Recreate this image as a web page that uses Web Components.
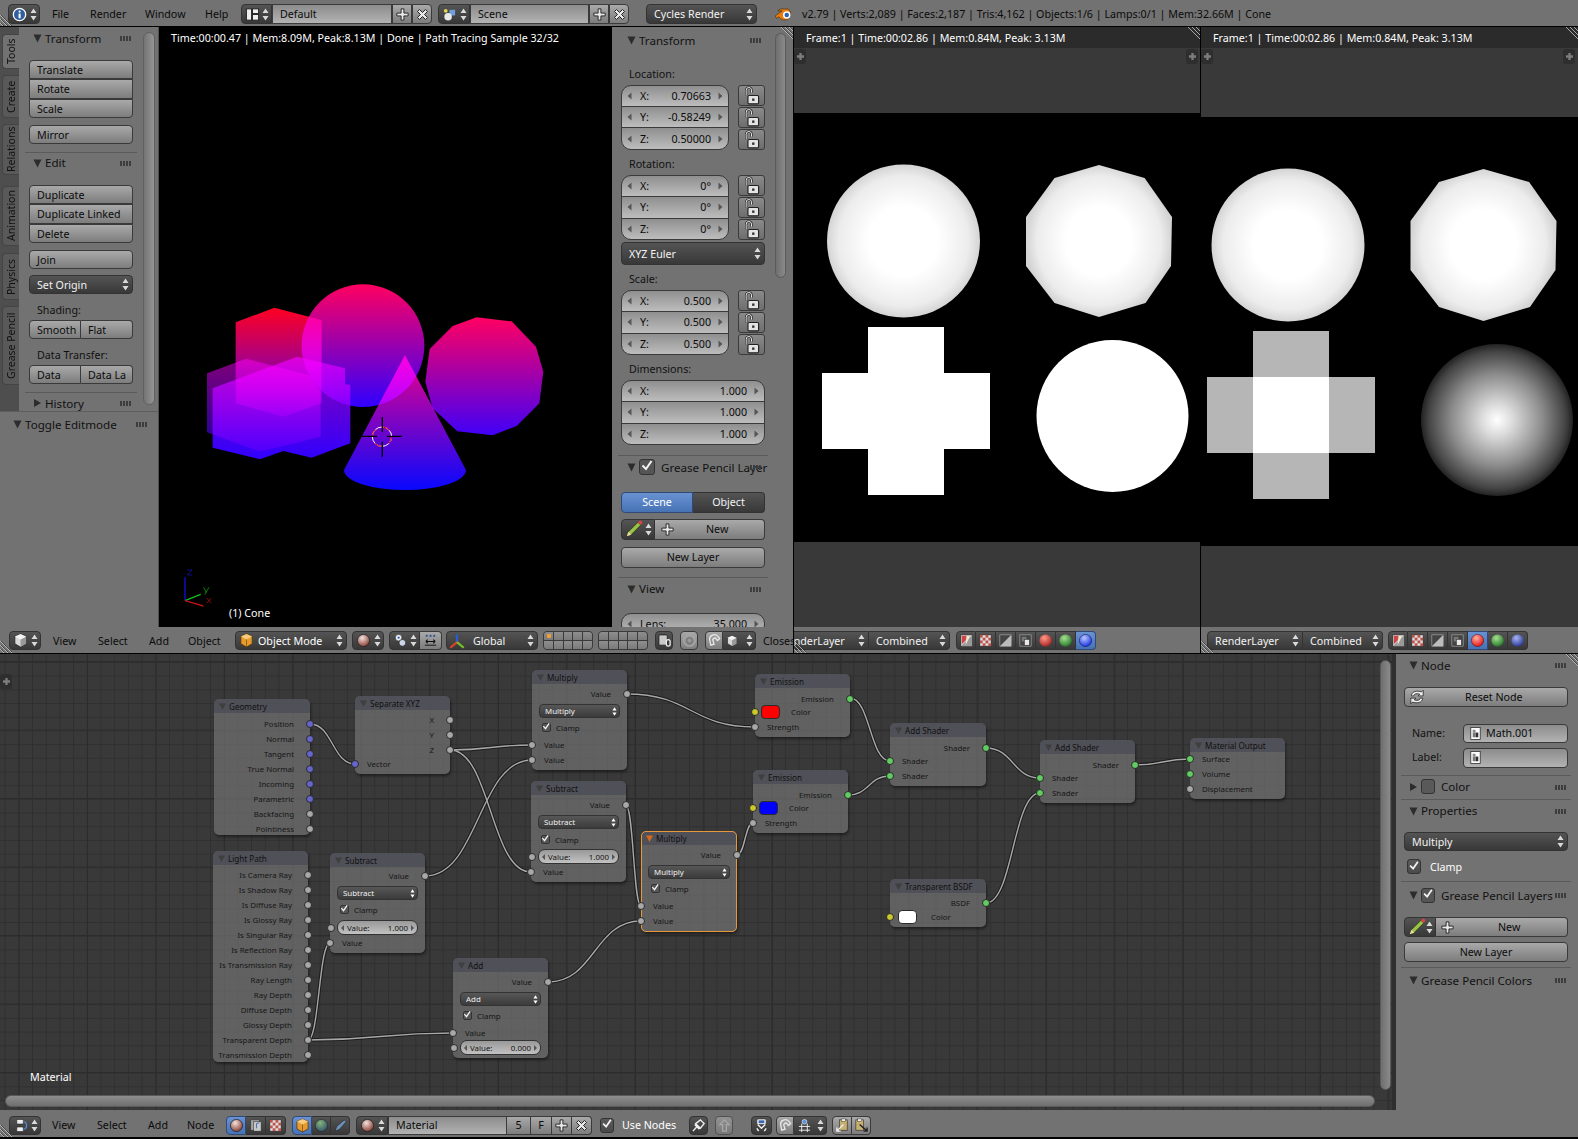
<!doctype html>
<html><head><meta charset="utf-8"><title>Blender</title>
<style>html,body{margin:0;padding:0;background:#000}</style></head>
<body>
<b-app>
  <b-hdr slot="top" style="height:26px;padding-top:2px">
    <b-w k="d" c ar style="margin-left:8px;width:32px;height:20px"><b-ic n="info"></b-ic></b-w>
    <b-m style="margin-left:12px;width:38px">File</b-m><b-m style="width:55px">Render</b-m><b-m style="width:60px">Window</b-m><b-m style="width:36px">Help</b-m>
    <b-w k="d" r="l" c ar style="width:31px;height:20px"><b-ic n="layout"></b-ic></b-w>
    <b-w k="f" r="n" style="width:120px;height:20px">Default</b-w>
    <b-w r="n" c style="width:20px;height:20px"><b-ic n="plus"></b-ic></b-w>
    <b-w r="r" c style="width:20px;height:20px"><b-ic n="x"></b-ic></b-w>
    <b-w k="d" r="l" c ar style="margin-left:6px;width:32px;height:20px"><b-ic n="scene"></b-ic></b-w>
    <b-w k="f" r="n" style="width:119px;height:20px">Scene</b-w>
    <b-w r="n" c style="width:20px;height:20px"><b-ic n="plus"></b-ic></b-w>
    <b-w r="r" c style="width:20px;height:20px"><b-ic n="x"></b-ic></b-w>
    <b-w k="d" ar style="margin-left:17px;width:111px;height:20px">Cycles Render</b-w>
    <b-ic n="logo" style="margin-left:17px" s="20"></b-ic>
    <b-m style="margin-left:8px">v2.79 | Verts:2,089 | Faces:2,187 | Tris:4,162 | Objects:1/6 | Lamps:0/1 | Mem:32.66M | Cone</b-m>
    <b-hatch style="left:0;top:14px" k="bl"></b-hatch>
  </b-hdr>
  <b-upper slot="upper">
    <b-area style="width:793px">
      <b-row style="height:600px">
        <b-shelf>
          <b-tabs>
            <b-tab on style="margin-top:7px;height:35px">Tools</b-tab>
            <b-tab style="margin-top:6px;height:43px">Create</b-tab>
            <b-tab style="margin-top:6px;height:51px">Relations</b-tab>
            <b-tab style="margin-top:11px;height:60px">Animation</b-tab>
            <b-tab style="margin-top:7px;height:47px">Physics</b-tab>
            <b-tab style="margin-top:6px;height:79px">Grease Pencil</b-tab>
          </b-tabs>
          <b-col slot="col" style="padding-left:10px;width:104px">
            <b-ph t="Transform" style="margin-left:-10px;width:120px;height:22px" g="101"></b-ph>
            <b-w style="margin-top:11px" r="t">Translate</b-w>
            <b-w r="n" style="height:20px">Rotate</b-w>
            <b-w r="b">Scale</b-w>
            <b-w style="margin-top:7px">Mirror</b-w>
            <b-sep style="margin:8px -4px 0"></b-sep>
            <b-ph t="Edit" style="margin-top:-2px;margin-left:-10px;width:120px;height:23px" g="101"></b-ph>
            <b-w style="margin-top:11px" r="t">Duplicate</b-w>
            <b-w r="n" style="height:20px">Duplicate Linked</b-w>
            <b-w r="b">Delete</b-w>
            <b-w style="margin-top:7px">Join</b-w>
            <b-w k="d" ar style="margin-top:6px">Set Origin</b-w>
            <b-lbl style="margin-top:8.5px">Shading:</b-lbl>
            <b-row style="margin-top:2.5px">
              <b-w r="l" style="width:52px">Smooth</b-w><b-w r="r" style="width:52px;border-left:0">Flat</b-w>
            </b-row>
            <b-lbl style="margin-top:8.5px">Data Transfer:</b-lbl>
            <b-row style="margin-top:2.5px">
              <b-w r="l" style="width:52px">Data</b-w><b-w r="r" style="width:52px;border-left:0">Data La</b-w>
            </b-row>
            <b-sep style="margin:8px -4px 0"></b-sep>
            <b-ph t="History" closed style="margin-top:-1px;margin-left:-10px;width:120px;height:22px" g="101"></b-ph>
          </b-col>
          <b-ph slot="bottom" t="Toggle Editmode" style="height:24px;width:158px;padding-left:13px;box-sizing:border-box" g="136"></b-ph>
        </b-shelf>
        <b-viewport>
          <b-vtext style="left:12px;top:4px;color:#fff">Time:00:00.47 | Mem:8.09M, Peak:8.13M | Done | Path Tracing Sample 32/32</b-vtext>
          <b-scene3d></b-scene3d>
          <b-vtext style="left:70px;top:579px;color:#fff">(1) Cone</b-vtext>
        </b-viewport>
        <b-npanel>
          <b-col style="width:155px;padding-left:9px;--ck:16px">
            <b-ph t="Transform" style="height:26px;margin-left:-8px" g="137"></b-ph>
            <b-lbl style="margin-top:13.5px">Location:</b-lbl>
            <b-xf style="margin-top:3.5px" l1="X:" v1="0.70663" l2="Y:" v2="-0.58249" l3="Z:" v3="0.50000"></b-xf>
            <b-lbl style="margin-top:7.5px">Rotation:</b-lbl>
            <b-xf style="margin-top:3px" l1="X:" v1="0°" l2="Y:" v2="0°" l3="Z:" v3="0°"></b-xf>
            <b-w k="d" ar style="margin-top:2px;height:23px;width:144px">XYZ Euler</b-w>
            <b-lbl style="margin-top:7px">Scale:</b-lbl>
            <b-xf style="margin-top:3px" l1="X:" v1="0.500" l2="Y:" v2="0.500" l3="Z:" v3="0.500"></b-xf>
            <b-lbl style="margin-top:7px">Dimensions:</b-lbl>
            <b-xf nolock style="margin-top:3px;width:144px" l1="X:" v1="1.000" l2="Y:" v2="1.000" l3="Z:" v3="1.000"></b-xf>
            <b-sep style="margin:10px -3px 0;width:150px"></b-sep>
            <b-ph t="Grease Pencil Layer" chk style="margin-top:-2px;height:26px;margin-left:-8px" g="137"></b-ph>
            <b-row style="margin-top:11.5px;width:144px">
              <b-w k="a" r="l" c style="width:72px;height:21px">Scene</b-w><b-w k="d" r="r" c style="width:72px;height:21px;border-left:0">Object</b-w>
            </b-row>
            <b-row style="margin-top:6px;width:144px">
              <b-w k="d" r="l" c ar style="width:34px;height:21px"><b-ic n="pencil" s="18"></b-ic></b-w>
              <b-w r="r" style="width:110px;height:21px;border-left:0;padding-left:5px"><b-ic n="plus"></b-ic><span style="margin-left:31px">New</span></b-w>
            </b-row>
            <b-w c style="margin-top:7px;height:21px;width:144px">New Layer</b-w>
            <b-sep style="margin:9px -3px 0;width:150px"></b-sep>
            <b-ph t="View" style="margin-top:-1px;height:24px;margin-left:-8px" g="137"></b-ph>
            <b-num style="margin-top:12px;width:144px" r="a" l="Lens:" v="35.000"></b-num>
          </b-col>
          <b-sb style="position:absolute;left:163px;top:6px;width:11px;height:245px"></b-sb>
          <b-hatch style="right:0;top:0" k="tr"></b-hatch>
        </b-npanel>
      </b-row>
      <b-hdr style="padding-top:1px">
        <b-w k="d" c ar style="margin-left:9px;width:32px"><b-ic n="cubew"></b-ic></b-w>
        <b-m style="margin-left:12px;width:45px">View</b-m><b-m style="width:51px">Select</b-m><b-m style="width:39px">Add</b-m><b-m style="width:47px">Object</b-m>
        <b-w k="d" ar style="width:112px;padding-left:3px"><b-ic n="cubeo"></b-ic><span style="margin-left:4px;color:#fff">Object Mode</span></b-w>
        <b-w k="d" c ar style="margin-left:5px;width:32px"><b-ic n="sphere"></b-ic></b-w>
        <b-w k="d" r="l" c ar style="margin-left:5px;width:31px"><b-ic n="pivot"></b-ic></b-w>
        <b-w r="r" c style="width:22px;border-left:0"><b-ic n="manip"></b-ic></b-w>
        <b-w k="d" ar style="margin-left:4px;width:92px;padding-left:1px"><b-ic n="axes" s="18"></b-ic><span style="margin-left:7px">Global</span></b-w>
        <b-layers dot style="margin-left:5px"></b-layers>
        <b-layers style="margin-left:5px"></b-layers>
        <b-w k="d" c style="margin-left:7px;width:18px"><b-ic n="lockcam"></b-ic></b-w>
        <b-w c style="margin-left:7px;width:18px"><b-ic n="target"></b-ic></b-w>
        <b-w r="l" c style="margin-left:7px;width:18px"><b-ic n="magnet"></b-ic></b-w>
        <b-w k="d" r="r" c ar style="width:33px;border-left:0"><b-ic n="cubew" s="12"></b-ic></b-w>
        <b-m style="margin-left:7px">Closest</b-m>
        <b-hatch style="left:0;bottom:0" k="bl"></b-hatch>
      </b-hdr>
    </b-area>
    <b-vl></b-vl>
    <b-area style="width:406px">
      <b-imgview t="Frame:1 | Time:00:02.86 | Mem:0.84M, Peak: 3.13M" a="113" vb="794 113 406 429">
        <b-pl style="left:0;top:22px"></b-pl><b-pl style="right:2px;top:22px"></b-pl>
        <b-hatch style="right:0;top:0" k="tr"></b-hatch>
      </b-imgview>
      <b-hdr style="padding-top:1px">
        <b-w k="d" r="l" ar style="margin-left:-21px;width:96px;padding-left:7px;flex:none">RenderLayer</b-w>
        <b-w k="d" r="r" ar style="width:81px;border-left:0">Combined</b-w>
        <b-chan style="margin-left:6px" on="b"></b-chan>
        <b-hatch style="left:0;bottom:0" k="bl"></b-hatch>
      </b-hdr>
    </b-area>
    <b-vl></b-vl>
    <b-area style="width:377px">
      <b-imgview two t="Frame:1 | Time:00:02.86 | Mem:0.84M, Peak: 3.13M" a="117" vb="1201 117 377 429">
        <b-pl style="left:0;top:22px"></b-pl><b-pl style="right:3px;top:22px"></b-pl>
        <b-hatch style="right:0;top:0" k="tr"></b-hatch>
      </b-imgview>
      <b-hdr style="padding-top:1px">
        <b-w k="d" r="l" ar style="margin-left:6px;width:96px">RenderLayer</b-w>
        <b-w k="d" r="r" ar style="width:80px;border-left:0">Combined</b-w>
        <b-chan style="margin-left:5px" on="r"></b-chan>
        <b-hatch style="left:0;bottom:0" k="bl"></b-hatch>
      </b-hdr>
    </b-area>
  </b-upper>
  <b-editor slot="editor">
    <b-canvas slot="canvas">
      <b-wires></b-wires>
      <b-pl style="left:0;top:20px"></b-pl>
      <b-node x="214" y="699" w="96" h="136" t="Geometry">
        <b-r o s="v" style="margin-top:3px">Position</b-r><b-r o s="v">Normal</b-r><b-r o s="v">Tangent</b-r><b-r o s="v">True Normal</b-r><b-r o s="v">Incoming</b-r><b-r o s="v">Parametric</b-r><b-r o s="w">Backfacing</b-r><b-r o s="w">Pointiness</b-r>
      </b-node>
      <b-node x="355" y="696" w="95" h="78" t="Separate XYZ">
        <b-r o s="w" style="margin-top:2px">X</b-r><b-r o s="w">Y</b-r><b-r o s="w">Z</b-r><b-r s="v" style="margin-top:-1px">Vector</b-r>
      </b-node>
      <b-node x="532" y="670" w="95" h="100" t="Multiply">
        <b-r o s="w" style="margin-top:2px">Value</b-r><b-nsel>Multiply</b-nsel><b-nchk>Clamp</b-nchk><b-r s="w" style="margin-top:2px">Value</b-r><b-r s="w">Value</b-r>
      </b-node>
      <b-node x="531" y="781" w="95" h="101" t="Subtract">
        <b-r o s="w" style="margin-top:2px">Value</b-r><b-nsel>Subtract</b-nsel><b-nchk style="margin-top:3px">Clamp</b-nchk><b-nfld v="1.000" style="margin-top:2px"></b-nfld><b-r s="w">Value</b-r>
      </b-node>
      <b-node x="641" y="831" w="96" h="101" t="Multiply" active>
        <b-r o s="w" style="margin-top:2px">Value</b-r><b-nsel>Multiply</b-nsel><b-nchk>Clamp</b-nchk><b-r s="w" style="margin-top:2px">Value</b-r><b-r s="w">Value</b-r>
      </b-node>
      <b-node x="755" y="674" w="95" h="63" t="Emission">
        <b-r o s="g" style="margin-top:3px">Emission</b-r><b-r s="y" sw="#ff0000" style="margin-top:-2px">Color</b-r><b-r s="w">Strength</b-r>
      </b-node>
      <b-node x="753" y="770" w="95" h="63" t="Emission">
        <b-r o s="g" style="margin-top:3px">Emission</b-r><b-r s="y" sw="#0000ff" style="margin-top:-2px">Color</b-r><b-r s="w">Strength</b-r>
      </b-node>
      <b-node x="890" y="723" w="96" h="63" t="Add Shader">
        <b-r o s="g" style="margin-top:3px">Shader</b-r><b-r s="g" style="margin-top:-2px">Shader</b-r><b-r s="g">Shader</b-r>
      </b-node>
      <b-node x="1040" y="740" w="95" h="63" t="Add Shader">
        <b-r o s="g" style="margin-top:3px">Shader</b-r><b-r s="g" style="margin-top:-2px">Shader</b-r><b-r s="g">Shader</b-r>
      </b-node>
      <b-node x="1190" y="738" w="95" h="61" t="Material Output">
        <b-r s="g" style="margin-top:-1px">Surface</b-r><b-r s="g">Volume</b-r><b-r s="w">Displacement</b-r>
      </b-node>
      <b-node x="890" y="879" w="96" h="48" t="Transparent BSDF">
        <b-r o s="g" style="margin-top:2px">BSDF</b-r><b-r s="y" sw="#ffffff" swx="8" style="margin-top:-1px">Color</b-r>
      </b-node>
      <b-node x="213" y="851" w="95" h="211" t="Light Path">
        <b-r o s="w" style="margin-top:2px">Is Camera Ray</b-r><b-r o s="w">Is Shadow Ray</b-r><b-r o s="w">Is Diffuse Ray</b-r><b-r o s="w">Is Glossy Ray</b-r><b-r o s="w">Is Singular Ray</b-r><b-r o s="w">Is Reflection Ray</b-r><b-r o s="w">Is Transmission Ray</b-r><b-r o s="w">Ray Length</b-r><b-r o s="w">Ray Depth</b-r><b-r o s="w">Diffuse Depth</b-r><b-r o s="w">Glossy Depth</b-r><b-r o s="w">Transparent Depth</b-r><b-r o s="w">Transmission Depth</b-r>
      </b-node>
      <b-node x="330" y="853" w="95" h="100" t="Subtract">
        <b-r o s="w" style="margin-top:1px">Value</b-r><b-nsel>Subtract</b-nsel><b-nchk>Clamp</b-nchk><b-nfld v="1.000"></b-nfld><b-r s="w">Value</b-r>
      </b-node>
      <b-node x="453" y="958" w="95" h="100" t="Add">
        <b-r o s="w" style="margin-top:2px">Value</b-r><b-nsel>Add</b-nsel><b-nchk>Clamp</b-nchk><b-r s="w" style="margin-top:2px">Value</b-r><b-nfld v="0.000" style="margin-top:0"></b-nfld>
      </b-node>
      <b-vtext style="left:30px;top:416px;color:#fff">Material</b-vtext>
      <b-sb style="position:absolute;left:1380px;top:6px;width:11px;height:430px"></b-sb>
      <b-sb h style="position:absolute;left:5px;top:441px;width:1370px;height:12px"></b-sb>
    </b-canvas>
    <b-side slot="side">
      <b-col style="width:164px;padding-left:8px">
        <b-ph t="Node" style="height:22px;margin-left:-9px" g="160"></b-ph>
        <b-w c style="margin-top:10.5px;height:20px;width:164px;padding-left:3px;justify-content:flex-start"><b-ic n="refresh" s="18"></b-ic><span style="margin-left:39px">Reset Node</span></b-w>
        <b-row style="margin-top:17px;align-items:center">
          <b-lbl style="width:59px;padding-left:8px;box-sizing:border-box">Name:</b-lbl>
          <b-w k="f" style="width:105px;padding-left:4px"><b-ic n="doc"></b-ic><span style="margin-left:3px">Math.001</span></b-w>
        </b-row>
        <b-row style="margin-top:5px;align-items:center">
          <b-lbl style="width:59px;padding-left:8px;box-sizing:border-box">Label:</b-lbl>
          <b-w k="f" style="width:105px;height:20px;padding-left:4px"><b-ic n="doc"></b-ic></b-w>
        </b-row>
        <b-sep style="margin:7.5px -3px 0;width:170px"></b-sep>
        <b-ph t="Color" closed chk0 style="height:21px;margin-left:-9px" g="160"></b-ph>
        <b-sep style="margin:2px -3px 0;width:170px"></b-sep>
        <b-ph t="Properties" style="height:21px;margin-left:-9px" g="160"></b-ph>
        <b-w k="d" ar style="margin-top:11px;height:19px;width:164px">Multiply</b-w>
        <b-row style="margin-top:8px;align-items:center;padding-left:3px"><b-ck></b-ck><span style="margin-left:9px;color:#fff">Clamp</span></b-row>
        <b-sep style="margin:7px -3px 0;width:170px"></b-sep>
        <b-ph t="Grease Pencil Layers" chk style="height:26px;margin-left:-9px" g="160"></b-ph>
        <b-row style="margin-top:9px">
          <b-w k="d" r="l" c ar style="width:32px;height:20px"><b-ic n="pencil" s="18"></b-ic></b-w>
          <b-w r="r" style="width:132px;height:20px;border-left:0;padding-left:4px"><b-ic n="plus"></b-ic><span style="margin-left:43px">New</span></b-w>
        </b-row>
        <b-w c style="margin-top:4.5px;height:20px;width:164px">New Layer</b-w>
        <b-sep style="margin:5.5px -3px 0;width:170px"></b-sep>
        <b-ph t="Grease Pencil Colors" style="height:24px;margin-left:-9px" g="160"></b-ph>
      </b-col>
      <b-hatch style="right:0;top:0" k="tr"></b-hatch>
    </b-side>
    <b-hdr slot="footer" style="height:27px;padding-top:3px">
      <b-w k="d" c ar style="margin-left:9px;width:32px"><b-ic n="nodes"></b-ic></b-w>
      <b-m style="margin-left:11px;width:45px">View</b-m><b-m style="width:51px">Select</b-m><b-m style="width:39px">Add</b-m><b-m style="width:39px">Node</b-m>
      <b-w k="a" r="l" c style="width:20px"><b-ic n="sphere"></b-ic></b-w>
      <b-w k="d" r="n" c style="width:20px;border-left:0"><b-ic n="tex"></b-ic></b-w>
      <b-w k="d" r="r" c style="width:20px;border-left:0"><b-ic n="checker"></b-ic></b-w>
      <b-w k="a" r="l" c style="margin-left:6px;width:20px"><b-ic n="cubeo"></b-ic></b-w>
      <b-w k="d" r="n" c style="width:19px;border-left:0"><b-ic n="globe"></b-ic></b-w>
      <b-w k="d" r="r" c style="width:19px;border-left:0"><b-ic n="brush"></b-ic></b-w>
      <b-w k="d" r="l" c ar style="margin-left:6px;width:32px"><b-ic n="sphere"></b-ic></b-w>
      <b-w k="f" r="n" style="width:119px">Material</b-w>
      <b-w r="n" c style="width:24px;border-left:0">5</b-w>
      <b-w r="n" c style="width:21px;border-left:0">F</b-w>
      <b-w r="n" c style="width:20px;border-left:0"><b-ic n="plus"></b-ic></b-w>
      <b-w r="r" c style="width:20px;border-left:0"><b-ic n="x"></b-ic></b-w>
      <b-ck style="margin-left:8px"></b-ck><span style="margin-left:8px;color:#fff;white-space:nowrap;width:67px">Use Nodes</span>
      <b-w k="d" c style="width:19px"><b-ic n="pin"></b-ic></b-w>
      <b-w c style="margin-left:7px;width:18px;opacity:.6"><b-ic n="up"></b-ic></b-w>
      <b-w k="d" c style="margin-left:18px;width:21px"><b-ic n="nodes2"></b-ic></b-w>
      <b-w r="l" c style="margin-left:4px;width:18px"><b-ic n="magnet"></b-ic></b-w>
      <b-w k="d" r="r" c ar style="width:33px;border-left:0"><b-ic n="gridsnap"></b-ic></b-w>
      <b-w r="l" c style="margin-left:5px;width:20px"><b-ic n="copy"></b-ic></b-w>
      <b-w r="r" c style="width:19px;border-left:0"><b-ic n="paste"></b-ic></b-w>
      <b-hatch style="left:0;bottom:0" k="bl"></b-hatch>
    </b-hdr>
  </b-editor>
</b-app>
<script>
const FONT='"Noto Sans","DejaVu Sans",sans-serif';
const def=(n,css,html)=>customElements.define(n,class extends HTMLElement{
  connectedCallback(){
    if(this.shadowRoot)return;
    const s=this.attachShadow({mode:'open'});
    const a=k=>this.getAttribute(k);
    s.innerHTML='<style>'+css+'</style>'+(typeof html==='function'?html(a,this):(html||'<slot></slot>'));
  }
});
const arrows=(c='#fff')=>`<svg class="ar" width="7" height="13" viewBox="0 0 7 13"><path d="M3.5 0.5 6.5 5H.5zM3.5 12.5.5 8h6z" fill="${c}" opacity=".8"/></svg>`;
const grad=(id,a,b)=>`<defs><radialGradient id="${id}" cx=".4" cy=".3" r=".8"><stop offset="0" stop-color="${a}"/><stop offset="1" stop-color="${b}"/></radialGradient></defs>`;
const ICONS={
 info:`<circle cx="8" cy="8" r="6.6" fill="#2f5f9e" stroke="#fff" stroke-width="1.4"/><rect x="7" y="7" width="2.2" height="5" fill="#fff"/><circle cx="8.1" cy="4.9" r="1.2" fill="#fff"/>`,
 layout:`<rect x="1.5" y="2" width="5.5" height="12" fill="#eee" stroke="#222"/><rect x="8" y="2" width="6.5" height="5" fill="#eee" stroke="#222"/><rect x="8" y="8" width="6.5" height="6" fill="#eee" stroke="#222"/>`,
 plus:`<path d="M6.5 2h3v4.5H14v3H9.5V14h-3V9.5H2v-3h4.5z" fill="#e8e8e8" stroke="#222" stroke-width="1"/>`,
 x:`<path d="M6.5 2h3v4.5H14v3H9.5V14h-3V9.5H2v-3h4.5z" fill="#e8e8e8" stroke="#222" stroke-width="1" transform="rotate(45 8 8)"/>`,
 scene:`<circle cx="4" cy="4" r="2" fill="#e9d54e"/><rect x="8" y="3" width="6" height="6" fill="#6fa0d8"/><circle cx="6.5" cy="10.5" r="4" fill="#e8e8e8"/>`,
 logo:`<path d="M1 9.5 6.5 5.5 3 5.4 5 4h6.5a5 5 0 1 1-7.6 6.2L2 11.5z" fill="#e87d0d" stroke="#4a2a06" stroke-width=".5"/><circle cx="10.2" cy="8.8" r="3" fill="#fff"/><circle cx="10.2" cy="8.8" r="1.8" fill="#2a66b0"/>`,
 lock:`<path d="M3.5 8V3.5A2.2 2.2 0 0 1 8 3.5V5.5" fill="none" stroke="#111" stroke-width="1.8"/><path d="M3.5 8V3.5A2.2 2.2 0 0 1 8 3.5V5.5" fill="none" stroke="#fff" stroke-width=".8"/><rect x="5" y="8" width="9" height="7" rx="1" fill="#e4e4e4" stroke="#222"/><rect x="8.5" y="10.5" width="2" height="2" fill="#333"/>`,
 pencil:`<path d="M1.5 14.5 3 10.5 11.5 2l2.5 2.5L5.5 13z" fill="#9bc34a" stroke="#2d3a12" stroke-width=".7"/><path d="M11.5 2 12.7 1a1.2 1.2 0 0 1 2.2 2.2L14 4.5z" fill="#e0414a"/><path d="M1.5 14.5 3 10.5 5.5 13z" fill="#f0d9a8"/>`,
 cubeo:`<path d="M8 1 14 3.8V11.5L8 15 2 11.5V3.8z" fill="#e59b2f" stroke="#5b3606" stroke-width=".8"/><path d="M2 3.8 8 6.8 14 3.8 8 1z" fill="#f8cc7c"/><path d="M8 6.8V15" stroke="#5b3606" stroke-width=".6"/>`,
 cubew:`<path d="M8 1 14 3.8V11.5L8 15 2 11.5V3.8z" fill="#d8d8d8" stroke="#222" stroke-width=".8"/><path d="M8 6.8 14 3.8V11.5L8 15z" fill="#999"/><path d="M2 3.8 8 6.8 14 3.8 8 1z" fill="#f4f4f4"/>`,
 sphere:grad('sp','#f3e3dc','#7a2a20')+`<circle cx="8" cy="8" r="6.5" fill="url(#sp)" stroke="#222" stroke-width=".8"/>`,
 globe:grad('gl','#87b37a','#274a68')+`<circle cx="8" cy="8" r="6.5" fill="url(#gl)" stroke="#222" stroke-width=".6"/>`,
 pivot:`<circle cx="6" cy="5" r="3.6" fill="#eee" stroke="#222" stroke-width=".7"/><circle cx="10" cy="10.5" r="3.6" fill="#ccd6e8" stroke="#222" stroke-width=".7"/><circle cx="6" cy="5" r="1.2" fill="#2a66b0"/>`,
 manip:`<g fill="#2a4f8f"><rect x="3" y="2" width="2" height="2"/><rect x="7" y="2" width="2" height="2"/><rect x="11" y="2" width="2" height="2"/></g><path d="M3 9h10M3 9l2-2M3 9l2 2M13 9l-2-2M13 9l-2 2" stroke="#111" stroke-width="1.2" fill="none"/><path d="M2 13h12" stroke="#111"/>`,
 axes:`<path d="M8 9V2" stroke="#2a5bd0" stroke-width="2"/><path d="M8 9 2 14" stroke="#e0402a" stroke-width="2"/><path d="M8 9 14 14" stroke="#76c02a" stroke-width="2"/>`,
 lockcam:`<rect x="2" y="2" width="9" height="11" rx="1" fill="#c9c9c9" stroke="#222"/><path d="M10 9a2 2 0 0 1 4 0v3a2 2 0 0 1-4 0z" fill="none" stroke="#eee" stroke-width="1.4"/>`,
 target:`<circle cx="8" cy="8" r="6" fill="none" stroke="#a8a8a8" stroke-width="1.4"/><circle cx="8" cy="8" r="3" fill="#999" stroke="#666"/>`,
 magnet:`<path d="M4 13 3 8A5 5 0 0 1 12 4L13.5 6 11 8 10 6.5A2 2 0 0 0 6.5 8.5L7.5 12z" fill="none" stroke="#e8e8e8" stroke-width="1.4"/>`,
 alpha:`<rect x="2" y="2" width="12" height="12" fill="#ddd" stroke="#222" stroke-width=".6"/><path d="M2 14 14 2V14z" fill="#999"/><path d="M3 3 12 3 3 12z" fill="#c44"/><path d="M8 3 12 3 7 13z" fill="#ece8d8"/>`,
 checker:`<rect x="2" y="2" width="12" height="12" fill="#ddd" stroke="#222" stroke-width=".6"/><g fill="#c0544a"><rect x="2" y="2" width="3" height="3"/><rect x="8" y="2" width="3" height="3"/><rect x="5" y="5" width="3" height="3"/><rect x="11" y="5" width="3" height="3"/><rect x="2" y="8" width="3" height="3"/><rect x="8" y="8" width="3" height="3"/><rect x="5" y="11" width="3" height="3"/><rect x="11" y="11" width="3" height="3"/></g>`,
 half:`<rect x="2" y="2" width="12" height="12" fill="#444" stroke="#ccc" stroke-width=".5"/><path d="M2 14 14 2V14z" fill="#bcbcbc"/>`,
 mini:`<rect x="2" y="2" width="12" height="12" fill="#444" stroke="#ccc" stroke-width=".5"/><rect x="4" y="4" width="5" height="5" fill="#777"/><rect x="7" y="7" width="5" height="6" fill="#e8e8e8" stroke="#333" stroke-width=".5"/>`,
 red:grad('rr','#ff9a8a','#a01515')+`<circle cx="8" cy="8" r="6.5" fill="url(#rr)"/>`,
 green:grad('gg','#a8e090','#15701f')+`<circle cx="8" cy="8" r="6.5" fill="url(#gg)"/>`,
 blue:grad('bb','#a8b4f0','#1a2a90')+`<circle cx="8" cy="8" r="6.5" fill="url(#bb)"/>`,
 redon:grad('ro','#ffb0a0','#e00000')+`<circle cx="8" cy="8" r="6.5" fill="url(#ro)" stroke="#400" stroke-width=".5"/>`,
 blueon:grad('bo','#b8c8ff','#0a20e0')+`<circle cx="8" cy="8" r="6.5" fill="url(#bo)" stroke="#004" stroke-width=".5"/>`,
 refresh:`<path d="M3 7C3 3 8 2 12 3.5L13.5 2V7H9l1.5-1.5C8 4.5 5.5 5 5 7z" fill="#eee" stroke="#222" stroke-width=".7"/><path d="M13 9C13 13 8 14 4 12.5L2.5 14V9H7L5.5 10.5C8 11.5 10.5 11 11 9z" fill="#eee" stroke="#222" stroke-width=".7"/>`,
 doc:`<rect x="3" y="1.5" width="10" height="13" fill="#fff" stroke="#222" stroke-width=".8"/><rect x="5" y="4" width="3" height="3" fill="#888"/><rect x="8" y="7" width="3" height="5" fill="#333"/><rect x="5" y="7" width="3" height="5" fill="#777"/>`,
 nodes:`<rect x="4" y="1.5" width="7" height="5" rx="1" fill="#eee" stroke="#222" stroke-width=".7"/><rect x="4" y="9.5" width="7" height="5" rx="1" fill="#eee" stroke="#222" stroke-width=".7"/><path d="M11 4q3.5 0 3.5 4T11 12" fill="none" stroke="#4a90e0" stroke-width="1.3"/>`,
 tex:`<rect x="3" y="2" width="9" height="11" fill="#a8a8a8" stroke="#333" stroke-width=".6"/><rect x="6" y="4" width="8" height="10" fill="#c9c9c9" stroke="#333" stroke-width=".6"/><path d="M9 11V6l3-1" stroke="#3a68b0" fill="none"/>`,
 brush:`<path d="M2 14 4 9 12 2 14 4 7 12z" fill="#6d8fb8" stroke="#222" stroke-width=".6"/>`,
 pin:`<path d="M2 14 6.5 9M5 6 10 2 14 6 10 11zM4 7l5 5" stroke="#eee" stroke-width="1.5" fill="none"/>`,
 up:`<path d="M8 2 13 7H10V14H6V7H3z" fill="none" stroke="#ccc" stroke-width="1.3"/>`,
 nodes2:`<rect x="3" y="1" width="10" height="6" rx="1.5" fill="#eee" stroke="#222" stroke-width=".6"/><rect x="5" y="2.5" width="6" height="3" fill="#3a68b0"/><path d="M4 7 8 11 12 7M3 11l2 3M13 11l-2 3" stroke="#eee" stroke-width="1.6" fill="none"/>`,
 gridsnap:`<path d="M2 9h12M2 13h12M5 6v9M11 6v9" stroke="#eee" stroke-width="1"/><circle cx="8" cy="4" r="2.5" fill="#5a90e0" stroke="#fff" stroke-width=".6"/>`,
 copy:`<rect x="5" y="2" width="8" height="11" fill="#c8b070" stroke="#222" stroke-width=".6"/><rect x="7" y="1" width="4" height="2.4" fill="#eee" stroke="#222" stroke-width=".4"/><path d="M9 7 2 14M2 10v4h4" fill="none" stroke="#eee" stroke-width="1.5"/>`,
 paste:`<rect x="2" y="2" width="8" height="11" fill="#c8b070" stroke="#222" stroke-width=".6"/><rect x="4" y="1" width="4" height="2.4" fill="#eee" stroke="#222" stroke-width=".4"/><path d="M6 7 14 14M14 10v4h-4" fill="none" stroke="#222" stroke-width="1.5"/>`
};
def('b-ic',':host{display:inline-flex;flex:none;line-height:0}',(a)=>{const s=a('s')||15;return `<svg width="${s}" height="${s}" viewBox="0 0 16 16">${ICONS[a('n')]||''}</svg>`});
def('b-app',`:host{display:grid;grid-template-rows:26px 626px 485px;row-gap:1px;width:1578px;height:1139px;background:#000;font:10.7px ${FONT};color:#0b0b0b;overflow:hidden}`,
 `<slot name="top"></slot><slot name="upper"></slot><slot name="editor"></slot>`);
def('b-hdr',`:host{display:flex;align-items:center;height:26px;box-sizing:border-box;background:#727272;overflow:hidden;position:relative;flex:none;white-space:nowrap}`);
def('b-m',`:host{display:block;flex:none;white-space:nowrap}`);
def('b-upper',`:host{display:flex;height:626px;overflow:hidden}`);
def('b-vl',`:host{display:block;width:1px;background:#000;flex:none}`);
def('b-area',`:host{display:flex;flex-direction:column;flex:none;height:626px;overflow:hidden}`);
def('b-row',`:host{display:flex}`);
def('b-col',`:host{display:block;flex:none;box-sizing:content-box}`);
def('b-lbl',`:host{display:block;height:15px;line-height:15px;padding-left:8px;white-space:nowrap;color:#111}`);
def('b-sep',`:host{display:block;height:1px;background:#5a5a5a}`);
def('b-w',`:host{display:flex;align-items:center;box-sizing:border-box;height:19px;border:1px solid #3a3a3a;border-radius:4px;padding:0 7px;background:linear-gradient(#a9a9a9,#7d7d7d);color:#0b0b0b;white-space:nowrap;overflow:hidden;flex:none;position:relative}
 :host([k=d]){background:linear-gradient(#545454,#383838);color:#f2f2f2;border-color:#333}
 :host([k=f]){background:linear-gradient(#8c8c8c,#b3b3b3)}
 :host([k=a]){background:linear-gradient(#6a92d2,#4672b4);border-color:#2f4a78;color:#fff}
 :host([r=l]){border-radius:4px 0 0 4px}:host([r=r]){border-radius:0 4px 4px 0}:host([r=t]){border-radius:4px 4px 0 0}:host([r=b]){border-radius:0 0 4px 4px}:host([r=n]){border-radius:0}
 :host([c]){justify-content:center;padding:0 2px}
 :host([c][ar]){justify-content:flex-start;padding-left:3px}
 .ar{position:absolute;right:3px;top:50%;margin-top:-6.5px}:host([c]) .ar{right:2px}`,
 (a)=>`<slot></slot>${a('ar')!==null?arrows():''}`);
def('b-ck',`:host{display:flex;flex:none;width:14px;height:15px;box-sizing:border-box;border:1px solid #333;border-radius:3px;background:linear-gradient(#5a5a5a,#4a4a4a);align-items:center;justify-content:center}`,
 `<svg width="14" height="14" viewBox="0 0 14 14" style="margin-top:-2px"><path d="M2.5 6.5 6 10 11.5 2" fill="none" stroke="#f4f4f4" stroke-width="2"/></svg>`);
def('b-ph',`:host{display:flex;align-items:center;position:relative;padding-left:14px;white-space:nowrap;font-size:11.6px;color:#111}
 svg.t{flex:none;margin-right:3px}.gr{position:absolute;top:50%;margin-top:-2px;width:11px;height:5px;background-image:radial-gradient(circle at 1px 1px,#3d3d3d 0.8px,transparent 1px),radial-gradient(circle at 1px 1px,#9a9a9a .8px,transparent 1px);background-size:3px 2px;background-position:0 0,0 1px}
 .ck{flex:none;width:var(--ck,14px);height:var(--ck,15px);border:1px solid #333;border-radius:3px;background:#555;margin-right:6px;box-sizing:border-box;display:flex;align-items:center;justify-content:center}.ck0{background:#595959}`,
 (a)=>{const cl=a('closed')!==null;const tri=cl?`<path d="M1 1 8 5 1 9z" fill="#2c2c2c"/>`:`<path d="M0.5 1.5H8.5L4.5 9.5z" fill="#2c2c2c"/>`;
  const ck=a('chk')!==null?`<span class="ck"><svg width="14" height="14" viewBox="0 0 14 14" style="margin-top:-2px"><path d="M2.5 6.5 6 10 11.5 2" fill="none" stroke="#f4f4f4" stroke-width="2"/></svg></span>`:(a('chk0')!==null?`<span class="ck ck0"></span>`:'');
  return `<svg class="t" width="9" height="10" viewBox="0 0 9 10">${tri}</svg>${ck}<span>${a('t')}</span><span class="gr" style="left:${a('g')||90}px"></span>`});
def('b-tabs',`:host{display:block;width:19px;height:384px;background:#4e4e4e;flex:none;overflow:hidden}`);
def('b-tab',`:host{display:flex;align-items:center;justify-content:center;box-sizing:border-box;width:17px;margin-left:2px;background:#595959;color:#111;writing-mode:vertical-rl;transform:rotate(180deg);border-radius:0 4px 4px 0;border:1px solid #444;border-left:0;white-space:nowrap;font-size:10.5px}
 :host([on]){background:#727272}`);
def('b-shelf',`:host{display:flex;flex-direction:column;width:159px;height:600px;flex:none;background:#727272;box-sizing:border-box;border-right:1px solid #505050}
 .top{display:flex;height:384px;overflow:hidden;position:relative}.sb{position:absolute;left:143px;top:5px;width:12px;height:373px;box-sizing:border-box;border-radius:6px;background:linear-gradient(90deg,#747474,#959595);border:1px solid #616161}
 .bot{border-top:1px solid #5d5d5d}`,
 `<div class="top"><slot></slot><slot name="col"></slot><div class="sb"></div></div><div class="bot"><slot name="bottom"></slot></div>`);
def('b-viewport',`:host{display:block;flex:1;position:relative;background:#000;overflow:hidden;height:600px}`);
def('b-vtext',`:host{display:block;position:absolute;white-space:nowrap;line-height:15px}`);
def('b-npanel',`:host{display:block;position:relative;width:181px;height:600px;flex:none;background:#727272;overflow:hidden;box-sizing:border-box}`);
def('b-sb',`:host{display:block;box-sizing:border-box;border-radius:6px;background:linear-gradient(90deg,#6f6f6f,#8a8a8a);border:1px solid #5a5a5a}:host([h]){background:linear-gradient(#8e8e8e,#6f6f6f)}`);
def('b-num',`:host{display:flex;align-items:center;box-sizing:border-box;height:22.67px;padding:0 5px;background:linear-gradient(#8f8f8f,#bdbdbd);border:1px solid #3a3a3a;color:#0b0b0b;position:relative;margin-top:-1px}
 :host([r=t]){border-radius:10px 10px 0 0;margin-top:0;height:21.67px}:host([r=b]){border-radius:0 0 10px 10px}:host([r=a]){border-radius:10px;height:22px}
 .v{margin-left:auto;margin-right:7px}.l{margin-left:8px}svg{flex:none}`,
 (a)=>`<svg width="5" height="8" viewBox="0 0 5 8"><path d="M4.5 .5V7.5L.5 4z" fill="#555"/></svg><span class="l">${a('l')}</span><span class="v">${a('v')}</span><svg width="5" height="8" viewBox="0 0 5 8"><path d="M.5 .5V7.5L4.5 4z" fill="#555"/></svg>`);
def('b-xf',`:host{display:block;position:relative;width:144px}.c{width:108px}:host([nolock]) .c{width:100%}
 .lk{position:absolute;left:117px;width:27px;height:21px;box-sizing:border-box;border:1px solid #3a3a3a;border-radius:3px;background:linear-gradient(#8a8a8a,#6e6e6e);display:flex;align-items:center;justify-content:center}`,
 (a,h)=>{const nl=a('nolock')!==null;const lks=nl?'':[0,22,44].map(t=>`<div class="lk" style="top:${t}px"><b-ic n="lock" s="19"></b-ic></div>`).join('');
  return `<div class="c"><b-num r="t" l="${a('l1')}" v="${a('v1')}"></b-num><b-num r="m" l="${a('l2')}" v="${a('v2')}"></b-num><b-num r="b" l="${a('l3')}" v="${a('v3')}"></b-num></div>${lks}`});
def('b-layers',`:host{display:grid;grid-template-columns:repeat(5,1fr);grid-template-rows:1fr 1fr;width:50px;height:19px;box-sizing:border-box;border:1px solid #3a3a3a;border-radius:4px;overflow:hidden;background:#3a3a3a;gap:1px;position:relative;flex:none}
 i{background:linear-gradient(#8e8e8e,#7a7a7a)}b{position:absolute;left:3px;top:2px;width:4px;height:4px;background:#f0a030;border-radius:1px}`,
 (a)=>'<i></i>'.repeat(10)+(a('dot')!==null?'<b></b>':''));
def('b-chan',`:host{display:flex;flex:none}`,(a)=>{
  const on=a('on');const it=[['alpha'],['checker'],['half'],['mini'],[on==='r'?'redon':'red',on==='r'],['green'],[on==='b'?'blueon':'blue',on==='b']];
  return it.map((x,i)=>`<b-w k="${x[1]?'a':'d'}" r="${i==0?'l':i==6?'r':'n'}" c style="width:20px;${i?'border-left:0':''}"><b-ic n="${x[0]}"></b-ic></b-w>`).join('')});
def('b-pl',`:host{display:flex;position:absolute;width:12px;height:15px;background:#2e2e2e;border-radius:3px;align-items:center;justify-content:center}`,
 `<svg width="7" height="7" viewBox="0 0 9 9"><path d="M3 0h3v3h3v3H6v3H3V6H0V3h3z" fill="#7d7d7d"/></svg>`);
def('b-hatch',`:host{display:block;position:absolute;width:13px;height:13px;line-height:0;z-index:5}`,(a)=>{
  const L=a('k')==='tr'?[[1,0,13,12],[5,0,13,8],[9,0,13,4]]:[[0,1,12,13],[0,5,8,13],[0,9,4,13]];
  return `<svg width="13" height="13">${L.map(l=>`<path d="M${l[0]} ${l[1]}L${l[2]} ${l[3]}" stroke="#c8c8c8" stroke-width=".8"/><path d="M${l[0]+1} ${l[1]}L${l[2]} ${l[3]-1}" stroke="#2a2a2a" stroke-width=".6"/>`).join('')}</svg>`});
def('b-imgview',`:host{display:flex;flex-direction:column;height:600px;flex:none;position:relative;overflow:hidden;background:#393939}
 .t{height:21px;background:#2b2b2b;color:#fff;line-height:23px;padding-left:12px;white-space:nowrap;flex:none;overflow:hidden}.g{flex:none}.k{background:#000;height:429px;flex:none;line-height:0}.r{flex:1}`,
 (a)=>{
  const two=a('two')!==null;const top=+a('a');
  const c=[903.5,241],p=[[1099,165],[1144.6,178],[1172,217],[1171,266],[1145.5,303],[1099,317],[1054.5,303],[1026,266],[1026,217],[1054.5,178]];
  const dx=two?384.5:0,dy=two?4:0;
  const pts=p.map(q=>(q[0]+dx)+','+(q[1]+dy)).join(' ');
  const cross=`M868 327H944V373H990V449H944V495H868V449H822V373H868Z`;
  const id=two?'B':'A';
  const defs=`<defs><radialGradient id="s${id}"><stop offset=".45" stop-color="#fff"/><stop offset=".85" stop-color="#ececec"/><stop offset="1" stop-color="#d4d4d4"/></radialGradient><radialGradient id="h${id}"><stop offset="0" stop-color="#fff"/><stop offset=".2" stop-color="#dcdcdc"/><stop offset=".6" stop-color="#8c8c8c"/><stop offset=".9" stop-color="#444"/><stop offset="1" stop-color="#222"/></radialGradient><filter id="b${id}"><feGaussianBlur stdDeviation=".7"/></filter></defs>`;
  const lower=two?`<g transform="translate(385 4)"><rect x="822" y="373" width="168" height="76" fill="#b6b6b6"/><rect x="868" y="327" width="76" height="168" fill="#b6b6b6"/><rect x="868" y="373" width="76" height="76" fill="#fff"/></g><circle cx="1497" cy="420" r="76" fill="url(#h${id})"/>`
    :`<path d="${cross}" fill="#fff"/><circle cx="1112.5" cy="416" r="76" fill="#fff"/>`;
  return `<div class="t">${a('t')}</div><div class="g" style="height:${top-48}px"></div><div class="k"><svg width="100%" height="429" viewBox="${a('vb')}">${defs}<circle cx="${c[0]+dx}" cy="${c[1]+dy}" r="76.5" fill="url(#s${id})"/><polygon points="${pts}" fill="url(#s${id})" filter="url(#b${id})"/>${lower}</svg></div><div class="r"></div><slot></slot>`});
def('b-scene3d',`:host{display:block;position:absolute;left:0;top:0;width:453px;height:600px;line-height:0;isolation:isolate}.s{mix-blend-mode:screen}`,()=>{
  const lg=(id,y1,c1,y2,c2,ym,cm)=>`<linearGradient id="${id}" gradientUnits="userSpaceOnUse" x1="0" x2="0" y1="${y1}" y2="${y2}"><stop offset="0" stop-color="${c1}"/>${cm?`<stop offset="${ym}" stop-color="${cm}"/>`:''}<stop offset="1" stop-color="${c2}"/></linearGradient>`;
  return `<svg width="453" height="600" viewBox="159 27 453 600"><defs>
  ${lg('g1',113,'#ff0020',430,'#30008a',.55,'#a00090')}${lg('g2',266,'#800078',545,'#1c00a0')}${lg('g3',260,'#9000b0',568,'#3000ff')}${lg('g4',44,'#ff0060',411,'#3000ff')}${lg('g5',142,'#ff0060',496,'#4000f8')}${lg('g6',255,'#f00088',660,'#0808ff')}
  </defs><g transform="translate(180 270) scale(.33333)">
  <polygon class="s" points="167,157 283,113 425,150 425,400 310,440 167,400" fill="url(#g1)"/>
  <polygon class="s" points="81,310 198,266 385,315 422,365 422,500 240,545 81,487" fill="url(#g2)"/>
  <polygon class="s" points="98,355 352,260 495,295 495,343 511,345 511,520 395,563 310,543 240,568 98,533" fill="url(#g3)"/>
  <circle class="s" cx="549" cy="227" r="184" fill="url(#g4)"/>
  <polygon class="s" points="890,142 995,154 1068,230 1090,305 1078,400 1010,468 938,496 832,484 758,415 736,335 749,237 818,168" fill="url(#g5)"/>
  <path class="s" d="M675 255 858 600A183 60 0 0 1 492 600Z" fill="url(#g6)"/>
  <circle cx="606" cy="500" r="29" fill="none" stroke="#fff" stroke-width="3"/><circle cx="606" cy="500" r="29" fill="none" stroke="#e00000" stroke-width="3" stroke-dasharray="22 24" />
  <path d="M607 441V486M607 515V560M546 499H591M621 499H666" stroke="#000" stroke-width="4"/>
  <path d="M15 992V922" stroke="#1010d8" stroke-width="4"/><path d="M15 992 62 973" stroke="#10c010" stroke-width="4"/><path d="M15 992 70 1008" stroke="#c01010" stroke-width="4"/>
  <path d="M22 900H36L22 915H36" stroke="#1010b8" fill="none" stroke-width="2.4"/><path d="M71 952 79 968M87 952 74 974" stroke="#10a010" fill="none" stroke-width="2.4"/><path d="M80 984 94 1000M94 984 80 1000" stroke="#a01010" fill="none" stroke-width="2.4"/>
  </g></svg>`});
def('b-editor',`:host{display:grid;grid-template-columns:1392px 4px 182px;grid-template-rows:456px 27px 2px;height:485px;overflow:hidden;background:#000}
 .st{background:#2f2f2f}.f{grid-column:1/4}`,
 `<slot name="canvas"></slot><div class="st"></div><slot name="side"></slot><div class="f"><slot name="footer"></slot></div>`);
def('b-side',`:host{display:block;position:relative;background:#727272;overflow:hidden}`);
def('b-canvas',`:host{display:block;position:relative;overflow:hidden;
  background-color:#393939;
  background-image:linear-gradient(#2c2c2c 1px,transparent 1px),linear-gradient(90deg,#2c2c2c 1px,transparent 1px),linear-gradient(#303030 1px,transparent 1px),linear-gradient(90deg,#303030 1px,transparent 1px);
  background-size:68.5px 68.5px,68.5px 68.5px,13.7px 13.7px,13.7px 13.7px;
  background-position:0 7px,18.5px 0,0 8px,4.7px 0}`);
def('b-wires',`:host{display:block;position:absolute;left:0;top:0;line-height:0}`,()=>{
  const W=[[310,724,355,764],[450,750,532,745],[450,750,531,872],[425,876,532,760],[627,694,755,727],[626,806,641,906],[737,855,753,823],[850,698,890,761],[848,795,890,776],[986,748,1040,778],[986,903,1040,793],[1135,765,1190,759],[308,1040,330,943],[308,1040,453,1033],[548,982,641,921]];
  const d=W.map(w=>{const h=Math.max(Math.abs(w[2]-w[0])*.5,7);return `M${w[0]} ${w[1]}C${w[0]+h} ${w[1]} ${w[2]-h} ${w[3]} ${w[2]} ${w[3]}`});
  return `<svg width="1392" height="456" viewBox="0 654 1392 456">${d.map(p=>`<path d="${p}" fill="none" stroke="#151515" stroke-opacity=".8" stroke-width="3.4"/>`).join('')}${d.map(p=>`<path d="${p}" fill="none" stroke="#a8a8a8" stroke-width="1.4"/>`).join('')}</svg>`});
def('b-node',`:host{display:block;position:absolute;box-sizing:border-box;border-radius:5px;background:rgba(112,112,112,.72);box-shadow:1px 2px 3px rgba(0,0,0,.45);font-size:7.9px;color:#161616}
 :host([active]){outline:1px solid #e8983c;outline-offset:-1px}
 .h{height:14px;border-radius:5px 5px 0 0;background:rgba(68,68,82,.55);display:flex;align-items:center;padding-left:5px;color:#111;white-space:nowrap;font-size:8.1px}
 svg{margin-right:3px;flex:none}`,
 (a,h)=>{h.style.left=a('x')+'px';h.style.top=(a('y')-654)+'px';h.style.width=a('w')+'px';h.style.height=a('h')+'px';
  const col=a('active')!==null?'#d8681c':'#3f3f3f';
  return `<div class="h"><svg width="7" height="7" viewBox="0 0 7 7"><path d="M0 .5H7L3.5 7z" fill="${col}"/></svg><span>${a('t')}</span></div><slot></slot>`});
const SC={v:'#6565cc',g:'#62cc62',y:'#c9c92c',w:'#a8a8a8'};
const sock=(c,side)=>`<i class="s" style="${side}:-4px;background:${SC[c]}"></i>`;
const NSCK=`.s{position:absolute;top:50%;margin-top:-4px;width:8px;height:8px;box-sizing:border-box;border-radius:50%;border:1px solid #2a2a2a}`;
def('b-r',`:host{display:flex;align-items:center;position:relative;height:15px;white-space:nowrap;padding:0 12px}
 :host([o]){justify-content:flex-end;padding:0 16px 0 0}${NSCK}.sw{width:19px;height:14px;border-radius:4px;border:1px solid #2a2a2a;box-sizing:border-box;flex:none;margin-right:11px;margin-left:-6px}`,
 (a)=>{const o=a('o')!==null;const c=a('s');
  const sw=a('sw')?`<span class="sw" style="background:${a('sw')};${a('swx')?'margin-left:-4px;margin-right:14px':''}"></span>`:'';
  return sw+`<slot></slot>`+sock(c,o?'right':'left')});
def('b-nsel',`:host{display:flex;align-items:center;position:relative;box-sizing:border-box;height:14px;margin:3px 7px 0;padding:0 5px;border-radius:4px;border:1px solid #333;background:linear-gradient(#575757,#3b3b3b);color:#f0f0f0;white-space:nowrap}svg{position:absolute;right:2px;top:1.5px}`,
 `<slot></slot><svg width="5" height="9" viewBox="0 0 7 13"><path d="M3.5 .5 6.5 5H.5zM3.5 12.5.5 8h6z" fill="#fff"/></svg>`);
def('b-nchk',`:host{display:flex;align-items:center;height:15px;margin-top:2px;padding-left:10px;white-space:nowrap}
 span{width:9px;height:9px;border:1px solid #333;border-radius:2px;background:#565656;margin-right:5px;box-sizing:border-box;display:flex;line-height:0}`,
 `<span><svg width="9" height="9" viewBox="0 0 9 9" style="margin:-2px 0 0 -1px"><path d="M1.5 4 4 7 8 1" stroke="#f4f4f4" fill="none" stroke-width="1.5"/></svg></span><slot></slot>`);
def('b-nfld',`:host{display:flex;align-items:center;position:relative;height:13px;margin:3px 7px 0;padding:0 9px;border-radius:7px;border:1px solid #333;background:linear-gradient(#999,#c2c2c2);justify-content:space-between;white-space:nowrap;color:#111}${NSCK}
 .s{left:-11px}.a{position:absolute;top:3.5px}`,
 (a)=>`<svg class="a" style="left:3px" width="3" height="6" viewBox="0 0 3 6"><path d="M3 0V6L0 3z" fill="#555"/></svg><span>Value:</span><span>${a('v')}</span><svg class="a" style="right:3px" width="3" height="6" viewBox="0 0 3 6"><path d="M0 0V6L3 3z" fill="#555"/></svg><i class="s" style="background:#a8a8a8;margin-top:-4px"></i>`);
</script>
</body></html>
